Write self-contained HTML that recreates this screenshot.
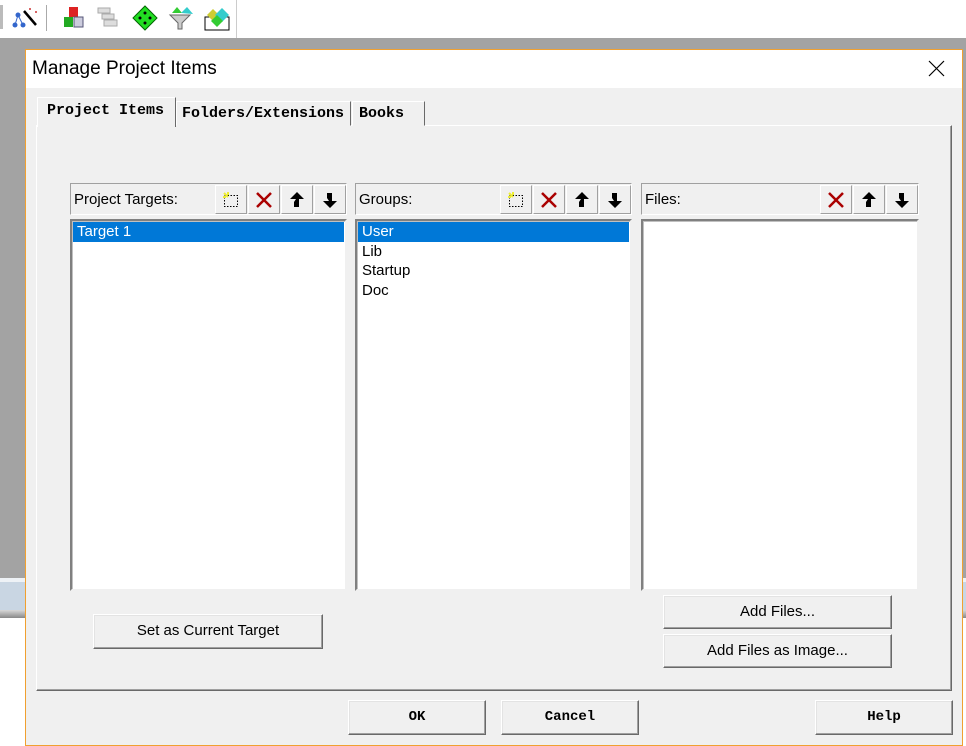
<!DOCTYPE html>
<html><head><style>
*{box-sizing:border-box;margin:0;padding:0}
body{width:966px;height:746px;position:relative;overflow:hidden;background:#fff;font-family:"Liberation Sans",sans-serif}
.a{position:absolute}
.btn{position:absolute;background:#f0f0f0;border:1px solid;border-color:#fff #696969 #696969 #fff;box-shadow:inset -1px -1px 0 #a0a0a0,inset 1px 1px 0 #e3e3e3;text-align:center;font-size:15px;color:#000}
.mono{font-family:"Liberation Mono",monospace;font-size:14px;font-weight:bold}
.hdr{position:absolute;border:1px solid;border-color:#a0a0a0 #fff #fff #a0a0a0;background:#f0f0f0;font-size:15px}
.list{position:absolute;background:#fff;border:2px solid;border-color:#808080 #f0f0f0 #f0f0f0 #808080;box-shadow:inset 1px 1px 0 #c0c0c0;font-size:15px;line-height:19.5px}
.ib{position:absolute;top:1px;width:32px;height:29px;background:#f0f0f0;border:1px solid;border-color:#fff #a0a0a0 #a0a0a0 #fff;display:flex;align-items:center;justify-content:center}
.sel{background:#0078d7;color:#fff;padding-left:4px}
.it{padding-left:4px}
.tab{position:absolute;background:#f0f0f0;border:1px solid;border-color:#fff #696969 transparent #fff;font-family:"Liberation Mono",monospace;font-weight:bold;font-size:15px;padding-left:6px}
</style></head><body>
<div class="a" style="left:0;top:38px;width:966px;height:540px;background:#a3a3a3"></div>
<div class="a" style="left:0;top:578px;width:966px;height:4px;background:#eef2f6"></div>
<div class="a" style="left:0;top:582px;width:966px;height:28px;background:#c9d6e3"></div>
<div class="a" style="left:0;top:610px;width:966px;height:8px;background:linear-gradient(#d8d8d8,#888)"></div>
<div class="a" style="left:0;top:0;width:237px;height:38px;background:#fff;border-right:1px solid #ccc"></div>
<div class="a" style="left:0;top:5px;width:3px;height:24px;background:#bbb"></div>
<svg class="a" style="left:10px;top:3px" width="30" height="28"><circle cx="8" cy="12" r="2.5" fill="#36c"/><circle cx="5" cy="22" r="2.5" fill="#36c"/><circle cx="13" cy="22" r="2.5" fill="#36c"/><path d="M8 12L5 22M8 12L13 22" stroke="#36c"/><path d="M14 8L26 22" stroke="#000" stroke-width="2.5"/><circle cx="20" cy="6" r="1" fill="#c33"/><circle cx="26" cy="9" r="1" fill="#c33"/></svg>
<div class="a" style="left:46px;top:5px;width:1px;height:26px;background:#aaa"></div>
<svg class="a" style="left:62px;top:6px" width="24" height="24"><rect x="7" y="1" width="9" height="10" fill="#d22"/><rect x="2" y="11" width="9" height="10" fill="#2a2"/><rect x="12" y="11" width="9" height="10" fill="#ccd" stroke="#557"/></svg>
<svg class="a" style="left:96px;top:6px" width="24" height="24" fill="#ddd" stroke="#aaa"><rect x="2" y="2" width="12" height="5"/><rect x="6" y="8" width="12" height="5"/><rect x="8" y="14" width="13" height="6"/></svg>
<svg class="a" style="left:132px;top:5px" width="26" height="26"><path d="M13 1L25 13L13 25L1 13Z" fill="#2d2" stroke="#060"/><circle cx="13" cy="8" r="1.5"/><circle cx="8" cy="13" r="1.5"/><circle cx="18" cy="13" r="1.5"/><circle cx="13" cy="18" r="1.5"/></svg>
<svg class="a" style="left:167px;top:5px" width="28" height="26"><path d="M3 10L14 10L23 10L15 18L15 24L11 24L11 18Z" fill="#ccc" stroke="#666"/><path d="M5 8L10 2L15 8Z" fill="#3c3"/><path d="M14 8L20 2L26 9Z" fill="#3cc"/></svg>
<svg class="a" style="left:203px;top:5px" width="28" height="26"><rect x="2" y="12" width="24" height="13" fill="#fff" stroke="#000"/><path d="M4 10L10 4L16 10L10 16Z" fill="#cc3"/><path d="M12 10L19 3L26 10L19 17Z" fill="#3cc"/><path d="M8 16L14 10L20 16L14 22Z" fill="#3c3"/></svg>

<div class="a" style="left:25px;top:49px;width:938px;height:697px;background:#f0f0f0;border:1px solid #f0a030"></div>
<div class="a" style="left:26px;top:50px;width:936px;height:38px;background:#fff"></div>
<div class="a" style="left:32px;top:58px;font-size:19px;color:#000">Manage Project Items</div>
<svg class="a" style="left:928px;top:60px" width="17" height="17"><path d="M1 1L16 16M16 1L1 16" stroke="#000" stroke-width="1.2"/></svg>

<div class="a" style="left:36px;top:125px;width:916px;height:566px;border:1px solid;border-color:#fff #696969 #696969 #fff;box-shadow:inset -1px -1px 0 #a0a0a0"></div>
<div class="tab" style="left:176px;top:101px;width:175px;height:25px;line-height:24px;padding-left:5px">Folders/Extensions</div>
<div class="tab" style="left:352px;top:101px;width:73px;height:25px;line-height:24px">Books</div>
<div class="tab" style="left:37px;top:97px;width:139px;height:30px;line-height:26px;border-bottom:none;padding-left:9px">Project Items</div>

<div class="hdr" style="left:70px;top:183px;width:277px;height:32px"><span class="a" style="left:3px;top:7px">Project Targets:</span>
<div class="ib" style="left:144px"><svg width="18" height="18"><rect x="2.5" y="4.5" width="13" height="11" fill="none" stroke="#000" stroke-dasharray="1.5 1.5"/><path d="M2 2L6 6M6 1L6 4M1 6L4 6" stroke="#ee3" stroke-width="2"/></svg></div>
<div class="ib" style="left:177px"><svg width="18" height="18"><path d="M2 2L16 16M16 2L2 16" stroke="#a00" stroke-width="2.5"/></svg></div>
<div class="ib" style="left:210px"><svg width="18" height="18"><path d="M9 1L16 8L11 8L11 16L6 16L6 11L8 8L2 8Z" fill="#000"/></svg></div>
<div class="ib" style="left:243px"><svg width="18" height="18"><path d="M9 17L16 10L11 10L11 2L6 2L6 7L8 10L2 10Z" fill="#000"/></svg></div></div>
<div class="hdr" style="left:355px;top:183px;width:277px;height:32px"><span class="a" style="left:3px;top:7px">Groups:</span>
<div class="ib" style="left:144px"><svg width="18" height="18"><rect x="2.5" y="4.5" width="13" height="11" fill="none" stroke="#000" stroke-dasharray="1.5 1.5"/><path d="M2 2L6 6M6 1L6 4M1 6L4 6" stroke="#ee3" stroke-width="2"/></svg></div>
<div class="ib" style="left:177px"><svg width="18" height="18"><path d="M2 2L16 16M16 2L2 16" stroke="#a00" stroke-width="2.5"/></svg></div>
<div class="ib" style="left:210px"><svg width="18" height="18"><path d="M9 1L16 8L11 8L11 16L6 16L6 11L8 8L2 8Z" fill="#000"/></svg></div>
<div class="ib" style="left:243px"><svg width="18" height="18"><path d="M9 17L16 10L11 10L11 2L6 2L6 7L8 10L2 10Z" fill="#000"/></svg></div></div>
<div class="hdr" style="left:641px;top:183px;width:278px;height:32px"><span class="a" style="left:3px;top:7px">Files:</span>
<div class="ib" style="left:178px"><svg width="18" height="18"><path d="M2 2L16 16M16 2L2 16" stroke="#a00" stroke-width="2.5"/></svg></div>
<div class="ib" style="left:211px"><svg width="18" height="18"><path d="M9 1L16 8L11 8L11 16L6 16L6 11L8 8L2 8Z" fill="#000"/></svg></div>
<div class="ib" style="left:244px"><svg width="18" height="18"><path d="M9 17L16 10L11 10L11 2L6 2L6 7L8 10L2 10Z" fill="#000"/></svg></div></div>

<div class="list" style="left:70px;top:219px;width:277px;height:372px;padding:1px"><div class="sel">Target 1</div></div>
<div class="list" style="left:355px;top:219px;width:277px;height:372px;padding:1px"><div class="sel">User</div><div class="it">Lib</div><div class="it">Startup</div><div class="it">Doc</div></div>
<div class="list" style="left:641px;top:219px;width:278px;height:372px"></div>

<div class="btn" style="left:93px;top:614px;width:230px;height:35px;line-height:32px">Set as Current Target</div>
<div class="btn" style="left:663px;top:595px;width:229px;height:34px;line-height:31px">Add Files...</div>
<div class="btn" style="left:663px;top:634px;width:229px;height:34px;line-height:31px">Add Files as Image...</div>
<div class="btn mono" style="left:348px;top:700px;width:138px;height:35px;line-height:32px">OK</div>
<div class="btn mono" style="left:501px;top:700px;width:138px;height:35px;line-height:32px">Cancel</div>
<div class="btn mono" style="left:815px;top:700px;width:138px;height:35px;line-height:32px">Help</div>
</body></html>
